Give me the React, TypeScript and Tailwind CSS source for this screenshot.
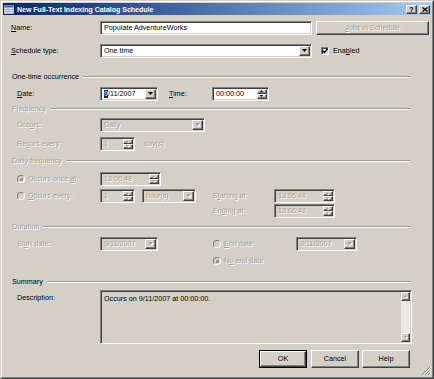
import type { ReactNode } from "react";

const SUNKEN =
  "border border-t-[#808080] border-l-[#808080] border-b-white border-r-white shadow-[inset_1px_1px_0_#404040,inset_-1px_-1px_0_#d4d0c8]";
const RAISED =
  "border border-t-white border-l-white border-b-[#404040] border-r-[#404040] shadow-[inset_-1px_-1px_0_#808080] bg-[#d4d0c8]";
const DIM = "text-[#a5a29a] [text-shadow:1px_1px_0_#ffffff]";

const U = ({ children }: { children: ReactNode }) => <span className="underline">{children}</span>;

function Arrow({ up, dim, w = 5 }: { up?: boolean; dim?: boolean; w?: number }) {
  const h = Math.ceil(w / 2);
  const pts = up ? `0,${h} ${w},${h} ${w / 2},0` : `0,0 ${w},0 ${w / 2},${h}`;
  return (
    <svg width={w + 1} height={h + 1} viewBox={`0 0 ${w + 1} ${h + 1}`}>
      {dim && <polygon points={pts} fill="#ffffff" transform="translate(1 1)" />}
      <polygon points={pts} fill={dim ? "#a19e96" : "#000000"} />
    </svg>
  );
}

function Combo({ w, dim, children }: { w: string; dim?: boolean; children: ReactNode }) {
  return (
    <div className={`flex h-full ${w} p-[1px] ${SUNKEN} ${dim ? "bg-[#d4d0c8]" : "bg-white"}`}>
      <div className={`flex flex-1 items-center overflow-hidden whitespace-nowrap pl-[2px] ${dim ? DIM : ""}`}>
        {children}
      </div>
      <div className={`flex w-[11px] items-center justify-center ${RAISED}`}>
        <Arrow dim={dim} />
      </div>
    </div>
  );
}

function Spin({ w, dim, children }: { w: string; dim?: boolean; children: ReactNode }) {
  return (
    <div className={`flex h-full ${w} p-[1px] ${SUNKEN} ${dim ? "bg-[#d4d0c8]" : "bg-white"}`}>
      <div className={`flex flex-1 items-center overflow-hidden whitespace-nowrap pl-[2px] ${dim ? DIM : ""}`}>
        {children}
      </div>
      <div className="flex w-[10px] flex-col">
        <div className={`flex flex-1 items-center justify-center ${RAISED}`}>
          <Arrow up dim={dim} w={3} />
        </div>
        <div className={`flex flex-1 items-center justify-center ${RAISED}`}>
          <Arrow dim={dim} w={3} />
        </div>
      </div>
    </div>
  );
}

function Radio({ on }: { on?: boolean }) {
  return (
    <div className="flex h-[8px] w-[8px] shrink-0 items-center justify-center rounded-full border border-t-[#808080] border-l-[#808080] border-b-white border-r-white bg-[#d4d0c8]">
      {on && <div className="h-[3px] w-[3px] rounded-full bg-[#8a8780]" />}
    </div>
  );
}

function Heading({ dim, children }: { dim?: boolean; children: ReactNode }) {
  return (
    <div className="flex h-[10px] w-[400px] items-center pl-[1px]">
      <span className={dim ? DIM : ""}>{children}</span>
      <div className="ml-[4px] h-[2px] flex-1 border-t border-b border-t-[#a09d96] border-b-white" />
    </div>
  );
}

function Btn({ w, dim, def, children }: { w: string; dim?: boolean; def?: boolean; children: ReactNode }) {
  const inner = (
    <div className={`flex h-full w-full items-center justify-center ${RAISED} ${dim ? DIM : ""}`}>{children}</div>
  );
  return def ? <div className={`h-full ${w} border border-black`}>{inner}</div> : <div className={`h-full ${w}`}>{inner}</div>;
}

export default function App() {
  return (
    <div className="relative h-[379px] w-[434px] border border-[#d4d0c8] border-b-[#404040] border-r-[#404040] bg-[#d4d0c8] font-['Liberation_Sans',Arial,sans-serif] text-[7.2px] leading-none text-black">
      <div className="h-full border border-white border-b-[#808080] border-r-[#808080] p-[1px]">
        {/* title bar */}
        <div className="flex h-[12px] items-center bg-linear-to-r from-[#0a246a] to-[#a6caf0] pl-[1px] pr-[1px]">
          <svg width="10" height="9" viewBox="0 0 10 9">
            <rect x="0" y="0" width="10" height="9" fill="#e8eef8" stroke="#7a8db8" />
            <rect x="0.5" y="0.5" width="9" height="2" fill="#3a62b0" />
            <path d="M1 4.5h8M1 6.5h8M4 3v5" stroke="#9aa8c8" strokeWidth="1" />
          </svg>
          <span className="ml-[3px] text-[7px] font-bold text-white">New Full-Text Indexing Catalog Schedule</span>
          <div className="ml-auto flex gap-[2px]">
            <div className={`flex h-[9px] w-[11px] items-center justify-center ${RAISED} text-[7px] font-bold`}>?</div>
            <div className={`flex h-[9px] w-[11px] items-center justify-center ${RAISED}`}>
              <svg width="6" height="5" viewBox="0 0 6 5">
                <path d="M0.5 0.5l5 4M5.5 0.5l-5 4" stroke="#000" strokeWidth="1.2" />
              </svg>
            </div>
          </div>
        </div>

        <div className="pl-[8px]">
          {/* Name */}
          <div className="mt-[6px] flex h-[14px] items-center">
            <span className="w-[89px]">
              <U>N</U>ame:
            </span>
            <div className={`flex h-full w-[212px] items-center bg-white pl-[3px] ${SUNKEN}`}>Populate AdventureWorks</div>
            <div className="ml-[4px] h-full">
              <Btn w="w-[113px]" dim>
                <U>J</U>obs in Schedule
              </Btn>
            </div>
          </div>

          {/* Schedule type */}
          <div className="mt-[9px] flex h-[14px] items-center">
            <span className="w-[89px]">
              <U>S</U>chedule type:
            </span>
            <Combo w="w-[212px]">One time</Combo>
            <div className={`ml-[9px] flex h-[8px] w-[8px] items-center justify-center bg-white ${SUNKEN}`}>
              <svg width="6" height="6" viewBox="0 0 6 6">
                <path d="M0.5 2.5L2.3 4.5L5.5 0.8" fill="none" stroke="#000" strokeWidth="1.3" />
              </svg>
            </div>
            <span className="ml-[4px]">
              Ena<U>b</U>led
            </span>
          </div>

          {/* One-time occurrence */}
          <div className="mt-[14px]">
            <Heading>One-time occurrence</Heading>
          </div>
          <div className="mt-[5px] flex h-[14px] items-center pl-[6px]">
            <span className="w-[83px]">
              <U>D</U>ate:
            </span>
            <Combo w="w-[58px]">
              <span className="bg-[#0a246a] text-white">9</span>/11/2007
            </Combo>
            <span className="ml-[11px] w-[43px]">
              <U>T</U>ime:
            </span>
            <Spin w="w-[57px]">00:00:00</Spin>
          </div>

          {/* Frequency */}
          <div className="mt-[3px]">
            <Heading dim>Frequency</Heading>
          </div>
          <div className="mt-[4px] flex h-[14px] items-center pl-[6px]">
            <span className={`w-[83px] ${DIM}`}>
              Occ<U>u</U>rs:
            </span>
            <Combo w="w-[105px]" dim>
              Daily
            </Combo>
          </div>
          <div className="mt-[5px] flex h-[14px] items-center pl-[6px]">
            <span className={`w-[83px] ${DIM}`}>
              Re<U>c</U>urs every:
            </span>
            <Spin w="w-[35px]" dim>
              1
            </Spin>
            <span className={`ml-[9px] ${DIM}`}>day(s)</span>
          </div>

          {/* Daily frequency */}
          <div className="mt-[5px]">
            <Heading dim>Daily frequency</Heading>
          </div>
          <div className="mt-[6px] flex h-[14px] items-center pl-[6px]">
            <div className="flex w-[83px] items-center">
              <Radio on />
              <span className={`ml-[3px] ${DIM}`}>
                Occurs once <U>a</U>t:
              </span>
            </div>
            <Spin w="w-[61px]" dim>
              13:06:48
            </Spin>
          </div>
          <div className="mt-[3px] flex h-[14px] items-center pl-[6px]">
            <div className="flex w-[83px] items-center">
              <Radio />
              <span className={`ml-[3px] ${DIM}`}>
                <U>O</U>ccurs every:
              </span>
            </div>
            <Spin w="w-[35px]" dim>
              1
            </Spin>
            <div className="ml-[7px] h-full">
              <Combo w="w-[54px]" dim>
                hour(s)
              </Combo>
            </div>
            <span className={`ml-[17px] w-[61px] ${DIM}`}>
              S<U>t</U>arting at:
            </span>
            <Spin w="w-[61px]" dim>
              13:06:48
            </Spin>
          </div>
          <div className="mt-[1px] flex h-[14px] items-center pl-[202px]">
            <span className={`w-[61px] ${DIM}`}>
              En<U>d</U>ing at:
            </span>
            <Spin w="w-[61px]" dim>
              13:06:48
            </Spin>
          </div>

          {/* Duration */}
          <div className="mt-[4px]">
            <Heading dim>Duration</Heading>
          </div>
          <div className="mt-[5px] flex h-[14px] items-center pl-[6px]">
            <span className={`w-[83px] ${DIM}`}>
              St<U>a</U>rt date:
            </span>
            <Combo w="w-[58px]" dim>
              9/11/2007
            </Combo>
            <div className="ml-[55px]">
              <Radio />
            </div>
            <span className={`ml-[3px] w-[72px] ${DIM}`}>
              <U>E</U>nd date:
            </span>
            <Combo w="w-[61px]" dim>
              9/11/2007
            </Combo>
          </div>
          <div className="mt-[3px] flex h-[14px] items-center pl-[202px]">
            <Radio on />
            <span className={`ml-[3px] ${DIM}`}>
              N<U>o</U> end date
            </span>
          </div>

          {/* Summary */}
          <div className="mt-[9px]">
            <Heading>Summary</Heading>
          </div>
          <div className="mt-[3px] flex h-[54px] items-start pl-[6px]">
            <span className="w-[83px] pt-[4px]">Description:</span>
            <div className={`flex h-full w-[312px] p-[1px] ${SUNKEN}`}>
              <div className="flex-1 pl-[2px] pt-[3px]">Occurs on 9/11/2007 at 00:00:00.</div>
              <div className="flex w-[9px] flex-col justify-between bg-[#ebe9e3]">
                <div className={`flex h-[9px] items-center justify-center ${RAISED}`}>
                  <Arrow up dim w={3} />
                </div>
                <div className={`flex h-[9px] items-center justify-center ${RAISED}`}>
                  <Arrow dim w={3} />
                </div>
              </div>
            </div>
          </div>

          {/* buttons */}
          <div className="mt-[6px] flex h-[18px] pl-[248px]">
            <Btn w="w-[48px]" def>
              OK
            </Btn>
            <div className="ml-[4px] h-full">
              <Btn w="w-[48px]">Cancel</Btn>
            </div>
            <div className="ml-[3px] h-full">
              <Btn w="w-[48px]">Help</Btn>
            </div>
          </div>
        </div>
      </div>

      {/* size grip */}
      <svg className="absolute bottom-[2px] right-[2px]" width="10" height="10" viewBox="0 0 10 10">
        <path d="M9 1L1 9M9 4L4 9M9 7L7 9" stroke="#808080" strokeWidth="1" />
        <path d="M10 1L2 9M10 4L5 9M10 7L8 9" stroke="#ffffff" strokeWidth="1" />
      </svg>
    </div>
  );
}
